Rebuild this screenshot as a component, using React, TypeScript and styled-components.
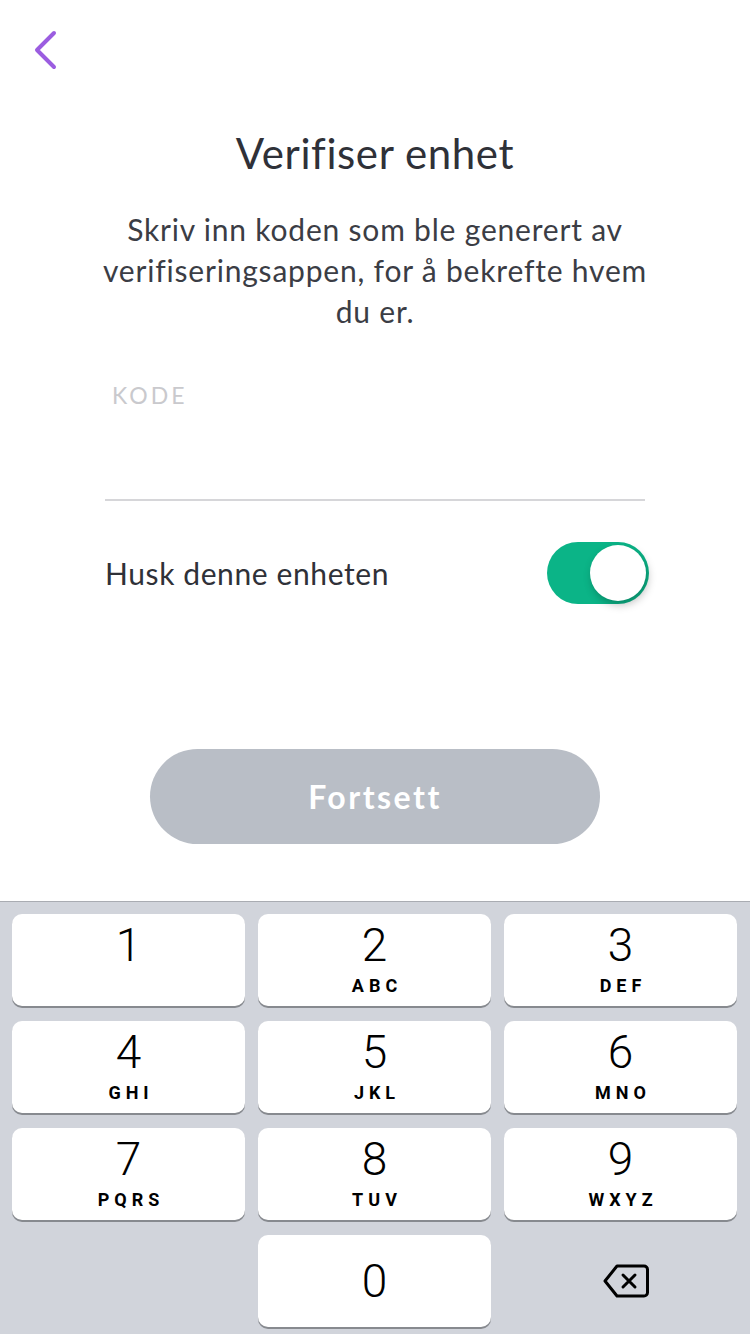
import React, { useState } from 'react';
import styled, { createGlobalStyle } from 'styled-components';

const GlobalStyle = createGlobalStyle`
  html, body {
    margin: 0;
    padding: 0;
    background: #ffffff;
  }
  * {
    box-sizing: border-box;
  }
`;

const KEYS = [
  { digit: '1', letters: '' },
  { digit: '2', letters: 'ABC' },
  { digit: '3', letters: 'DEF' },
  { digit: '4', letters: 'GHI' },
  { digit: '5', letters: 'JKL' },
  { digit: '6', letters: 'MNO' },
  { digit: '7', letters: 'PQRS' },
  { digit: '8', letters: 'TUV' },
  { digit: '9', letters: 'WXYZ' },
];

const App = () => {
  const [remember, setRemember] = useState(true);
  const [code, setCode] = useState('');

  return (
    <>
      <GlobalStyle />
      <Screen>
        <Header>
          <BackButton aria-label="Tilbake">
            <svg width="28" height="40" viewBox="0 0 28 40">
              <path
                d="M22 3 L5 20 L22 37"
                fill="none"
                stroke="#9b5de0"
                strokeWidth="4"
                strokeLinecap="round"
                strokeLinejoin="round"
              />
            </svg>
          </BackButton>
        </Header>

        <Content>
          <Title>Verifiser enhet</Title>
          <Description>
            Skriv inn koden som ble generert av verifiseringsappen, for å bekrefte hvem du er.
          </Description>

          <Field>
            <FieldLabel>KODE</FieldLabel>
            <FieldValue>{code}</FieldValue>
          </Field>

          <ToggleRow>
            <ToggleLabel>Husk denne enheten</ToggleLabel>
            <Switch $on={remember} onClick={() => setRemember(!remember)}>
              <Knob $on={remember} />
            </Switch>
          </ToggleRow>

          <ContinueButton disabled={code.length === 0}>Fortsett</ContinueButton>
        </Content>

        <Keyboard>
          {KEYS.map((k) => (
            <Key key={k.digit} onClick={() => setCode(code + k.digit)}>
              <Digit>{k.digit}</Digit>
              <Letters>{k.letters}</Letters>
            </Key>
          ))}
          <EmptyCell />
          <Key $centered onClick={() => setCode(code + '0')}>
            <Digit>0</Digit>
          </Key>
          <DeleteKey onClick={() => setCode(code.slice(0, -1))}>
            <svg width="48" height="36" viewBox="0 0 48 36">
              <path
                d="M15 3 H42 a3.5 3.5 0 0 1 3.5 3.5 V29.5 a3.5 3.5 0 0 1 -3.5 3.5 H15 L3 18 Z"
                fill="none"
                stroke="#000"
                strokeWidth="3"
                strokeLinejoin="round"
              />
              <path
                d="M21 12 L33 24 M33 12 L21 24"
                fill="none"
                stroke="#000"
                strokeWidth="3"
                strokeLinecap="round"
              />
            </svg>
          </DeleteKey>
        </Keyboard>
      </Screen>
    </>
  );
};

export default App;

const Screen = styled.div`
  width: 750px;
  height: 1334px;
  display: flex;
  flex-direction: column;
  background: #ffffff;
  font-family: Lato, 'Open Sans', sans-serif;
  overflow: hidden;
`;

const Header = styled.div`
  height: 100px;
  display: flex;
  align-items: flex-start;
  padding: 30px 0 0 32px;
`;

const BackButton = styled.button`
  border: none;
  background: none;
  padding: 0;
  cursor: pointer;
  display: flex;
`;

const Content = styled.div`
  display: flex;
  flex-direction: column;
  padding: 0 105px;
`;

const Title = styled.h1`
  margin: 28px 0 0;
  font-size: 42px;
  line-height: 50px;
  font-weight: 400;
  color: #2f3138;
  text-align: center;
  letter-spacing: 0.6px;
`;

const Description = styled.p`
  margin: 31px -4px 0;
  font-size: 30px;
  line-height: 41px;
  color: #3b3d45;
  text-align: center;
  letter-spacing: 0.8px;
`;

const Field = styled.div`
  margin-top: 48px;
  height: 121px;
  border-bottom: 2px solid #d6d6d9;
  display: flex;
  flex-direction: column;
`;

const FieldLabel = styled.div`
  padding-left: 7px;
  font-size: 23px;
  line-height: 30px;
  color: #c9c9cd;
  letter-spacing: 3px;
`;

const FieldValue = styled.div`
  font-size: 30px;
  line-height: 40px;
  color: #2f3138;
`;

const ToggleRow = styled.div`
  margin-top: 41px;
  height: 62px;
  display: flex;
  align-items: center;
  justify-content: space-between;
  margin-right: -4px;
`;

const ToggleLabel = styled.div`
  font-size: 30px;
  color: #2f3138;
  letter-spacing: 0.6px;
`;

const Switch = styled.div<{ $on: boolean }>`
  position: relative;
  width: 102px;
  height: 62px;
  border-radius: 31px;
  background: ${(p) => (p.$on ? '#0bb487' : '#e4e4e6')};
  cursor: pointer;
`;

const Knob = styled.div<{ $on: boolean }>`
  position: absolute;
  top: 3px;
  left: ${(p) => (p.$on ? '43px' : '3px')};
  width: 56px;
  height: 56px;
  border-radius: 50%;
  background: #ffffff;
  box-shadow: 2px 4px 8px rgba(0, 0, 0, 0.25);
`;

const ContinueButton = styled.button`
  align-self: center;
  margin-top: 145px;
  width: 450px;
  height: 95px;
  border: none;
  border-radius: 48px;
  background: #b9bec6;
  color: #ffffff;
  font-family: Lato, 'Open Sans', sans-serif;
  font-size: 32px;
  font-weight: 700;
  letter-spacing: 2.5px;
  cursor: pointer;

  &:disabled {
    cursor: default;
  }
`;

const Keyboard = styled.div`
  margin-top: auto;
  height: 433px;
  background: #d1d4db;
  border-top: 1px solid #a9acb2;
  padding: 12px 13px 0 12px;
  display: grid;
  grid-template-columns: repeat(3, 1fr);
  grid-auto-rows: 92px;
  column-gap: 13px;
  row-gap: 15px;
`;

const Key = styled.button<{ $centered?: boolean }>`
  border: none;
  border-radius: 10px;
  background: #ffffff;
  box-shadow: 0 2px 0 #878a8f;
  display: flex;
  flex-direction: column;
  align-items: center;
  justify-content: ${(p) => (p.$centered ? 'center' : 'flex-start')};
  padding: ${(p) => (p.$centered ? '0' : '8px 0 0')};
  color: #000000;
  cursor: pointer;
`;

const Digit = styled.span`
  font-family: Roboto, 'Liberation Sans', sans-serif;
  font-size: 46px;
  font-weight: 300;
  line-height: 46px;
`;

const Letters = styled.span`
  margin-top: 7px;
  font-family: Roboto, 'Liberation Sans', sans-serif;
  font-size: 18px;
  font-weight: 700;
  line-height: 22px;
  letter-spacing: 5px;
  padding-left: 5px;
`;

const EmptyCell = styled.div``;

const DeleteKey = styled.button`
  border: none;
  background: transparent;
  display: flex;
  align-items: center;
  justify-content: center;
  padding: 0 0 0 10px;
  cursor: pointer;
`;
